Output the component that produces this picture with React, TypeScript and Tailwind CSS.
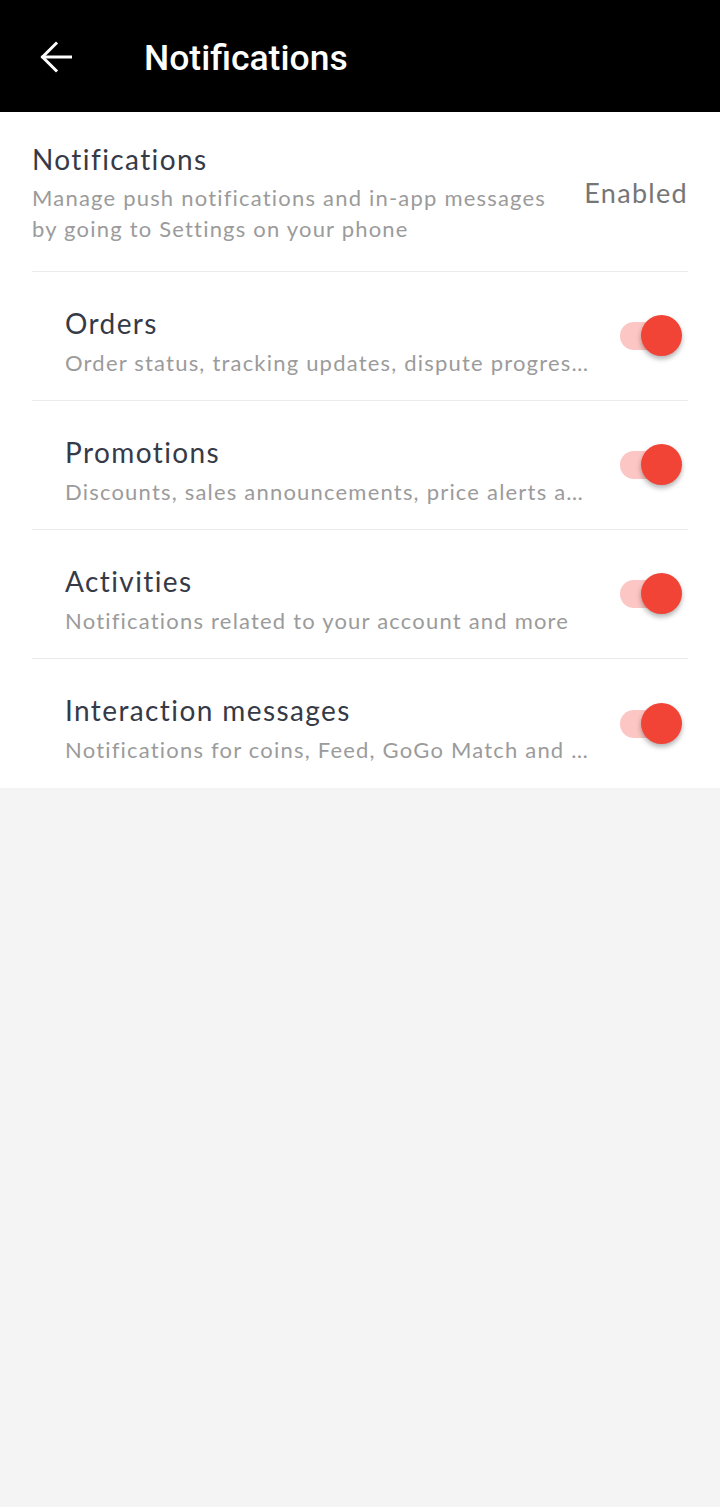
const items = [
  { title: 'Orders', desc: 'Order status, tracking updates, dispute progress and more' },
  { title: 'Promotions', desc: 'Discounts, sales announcements, price alerts and more' },
  { title: 'Activities', desc: 'Notifications related to your account and more' },
  { title: 'Interaction messages', desc: 'Notifications for coins, Feed, GoGo Match and more' },
]

function Toggle() {
  return (
    <div className="relative w-[62px] h-[42px] shrink-0">
      <div className="absolute left-0 top-[7px] w-[52px] h-[28px] rounded-full bg-[#fbc6c3]" />
      <div className="absolute right-0 top-0 w-[41px] h-[41px] rounded-full bg-[#f14437] shadow-[0_3px_5px_rgba(0,0,0,0.3)]" />
    </div>
  )
}

export default function App() {
  return (
    <div className="min-h-[1507px] bg-[#f4f4f4] font-['Lato',sans-serif]">
      <header className="h-[112px] bg-black flex items-center pl-[40px] gap-[72px]">
        <svg width="32" height="32" viewBox="0 0 32 32" fill="none" stroke="white" strokeWidth="3" strokeLinecap="square" className="mt-[2px]">
          <path d="M31 16H3" />
          <path d="M16 2.5 2.5 16 16 29.5" />
        </svg>
        <h1 className="text-white text-[35.5px] font-medium font-['Roboto',sans-serif] mt-[5px]">Notifications</h1>
      </header>

      <div className="bg-white px-[32px]">
        <div className="flex items-center justify-between h-[160px] border-b border-[#ececec] pt-[2px]">
          <div>
            <div className="text-[28px] tracking-[1.4px] text-[#363a47] leading-[34px]">Notifications</div>
            <div className="text-[22px] tracking-[1.2px] text-[#9b9b9b] leading-[31px] mt-[6px] w-[530px]">
              Manage push notifications and in-app messages by going to Settings on your phone
            </div>
          </div>
          <div className="text-[27px] tracking-[1.3px] text-[#767676] mt-[2px]">Enabled</div>
        </div>

        {items.map((item, i) => (
          <div
            key={item.title}
            className={`flex items-center justify-between h-[129px] pl-[33px] pr-[6px] ${i < items.length - 1 ? 'border-b border-[#ececec]' : ''}`}
          >
            <div className="min-w-0 w-[527px] mt-[11px]">
              <div className="text-[28px] tracking-[1.4px] text-[#363a47] leading-[34px] truncate">{item.title}</div>
              <div className="text-[22px] tracking-[1.2px] text-[#9b9b9b] leading-[31px] mt-[7px] truncate">{item.desc}</div>
            </div>
            <Toggle />
          </div>
        ))}
      </div>
    </div>
  )
}
